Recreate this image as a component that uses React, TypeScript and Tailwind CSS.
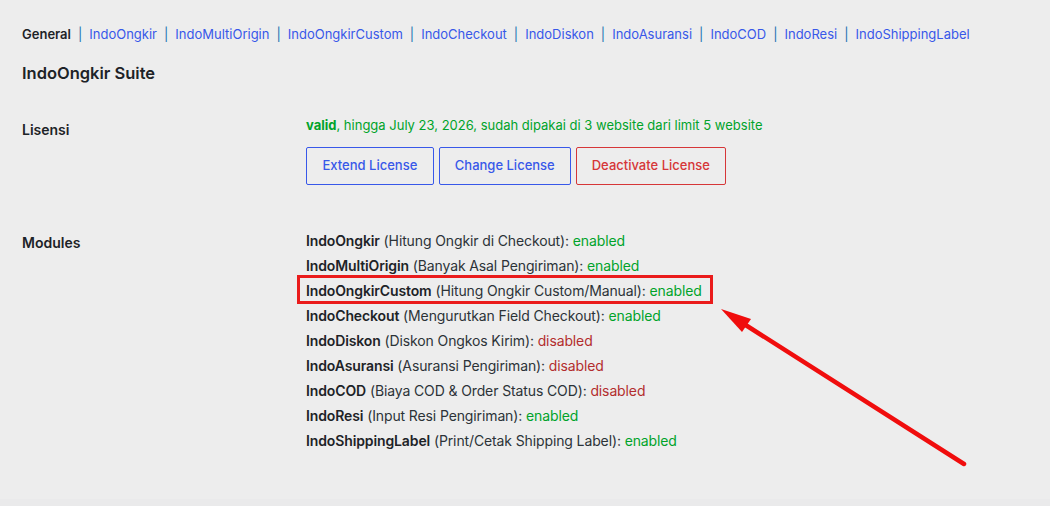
import React from "react";

type Module = { name: string; desc: string; enabled: boolean; highlight?: boolean };

const TABS = [
  "IndoOngkir",
  "IndoMultiOrigin",
  "IndoOngkirCustom",
  "IndoCheckout",
  "IndoDiskon",
  "IndoAsuransi",
  "IndoCOD",
  "IndoResi",
  "IndoShippingLabel",
];

const MODULES: Module[] = [
  { name: "IndoOngkir", desc: "Hitung Ongkir di Checkout", enabled: true },
  { name: "IndoMultiOrigin", desc: "Banyak Asal Pengiriman", enabled: true },
  { name: "IndoOngkirCustom", desc: "Hitung Ongkir Custom/Manual", enabled: true, highlight: true },
  { name: "IndoCheckout", desc: "Mengurutkan Field Checkout", enabled: true },
  { name: "IndoDiskon", desc: "Diskon Ongkos Kirim", enabled: false },
  { name: "IndoAsuransi", desc: "Asuransi Pengiriman", enabled: false },
  { name: "IndoCOD", desc: "Biaya COD & Order Status COD", enabled: false },
  { name: "IndoResi", desc: "Input Resi Pengiriman", enabled: true },
  { name: "IndoShippingLabel", desc: "Print/Cetak Shipping Label", enabled: true },
];

const Arrow = () => (
  <svg className="absolute left-0 top-0 pointer-events-none" width="1050" height="506" viewBox="0 0 1050 506">
    <line x1="964" y1="464" x2="744" y2="324" stroke="#f00d0d" strokeWidth="4.5" strokeLinecap="round" />
    <polygon points="721,309 751,319 742,332" fill="#f00d0d" />
  </svg>
);

export default function App() {
  return (
    <div
      className="relative w-[1050px] h-[506px] bg-[#ededed] flex flex-col text-[#1d2327] overflow-hidden"
      style={{ fontFamily: "Inter, 'Noto Sans', sans-serif" }}
    >
      <div className="flex-1 px-[22px] pt-[26px]">
        {/* tabs */}
        <div className="flex items-center text-[13px] leading-[16px]">
          <span className="font-semibold text-[#1d2327]">General</span>
          {TABS.map((t) => (
            <React.Fragment key={t}>
              <span className="text-[#2271b1] mx-[7px]">|</span>
              <a className="text-[#3858e9]">{t}</a>
            </React.Fragment>
          ))}
        </div>

        <h2 className="mt-[21px] text-[16.5px] leading-[20px] font-semibold">IndoOngkir Suite</h2>

        <div className="mt-[32px] grid grid-cols-[284px_1fr]">
          <div className="pt-[5px] text-[14px] leading-[20px] font-semibold">Lisensi</div>
          <div>
            <p className="text-[13px] leading-[20px] text-[#00a32a]">
              <b className="font-bold">valid</b>, hingga July 23, 2026, sudah dipakai di 3 website dari limit 5 website
            </p>
            <div className="mt-[12px] flex gap-[5px]">
              <button className="h-[38px] px-[15.5px] border border-[#3858e9] rounded-[2px] text-[13px] font-medium text-[#3858e9]">
                Extend License
              </button>
              <button className="h-[38px] px-[15px] border border-[#3858e9] rounded-[2px] text-[13px] font-medium text-[#3858e9]">
                Change License
              </button>
              <button className="h-[38px] px-[15px] border border-[#d63638] rounded-[2px] text-[13px] font-medium text-[#d63638]">
                Deactivate License
              </button>
            </div>
          </div>

          <div className="mt-[43px] pt-[5px] text-[14px] leading-[20px] font-semibold">Modules</div>
          <div className="mt-[43px] flex flex-col items-start text-[14px] leading-[25px] tracking-[-0.12px] text-[#2c3338]">
            {MODULES.map((m) => (
              <div key={m.name} className="relative">
                <b className="font-semibold text-[#1d2327]">{m.name}</b> ({m.desc}):{" "}
                <span className={m.enabled ? "text-[#00a32a]" : "text-[#b32d2e]"}>
                  {m.enabled ? "enabled" : "disabled"}
                </span>
                {m.highlight && (
                  <span className="absolute left-[-9px] right-[-11px] top-[-3px] bottom-[-1px] border-[3px] border-[#ea1c1c]" />
                )}
              </div>
            ))}
          </div>
        </div>
      </div>
      <div className="h-[7px] bg-[#eaeaeb]" />
      <Arrow />
    </div>
  );
}
